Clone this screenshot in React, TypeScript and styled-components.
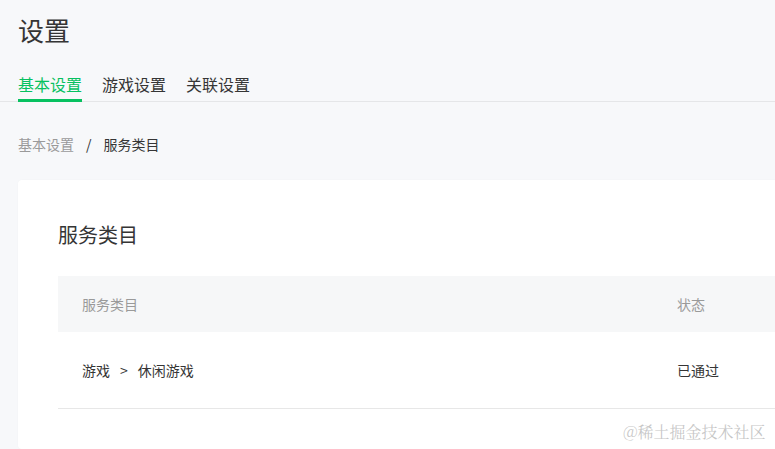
import React from 'react';
import styled, { createGlobalStyle } from 'styled-components';

const GlobalStyle = createGlobalStyle`
  html, body {
    margin: 0;
    padding: 0;
    background: #f7f8fa;
    overflow: hidden;
  }
  body {
    font-family: "Noto Sans CJK SC", "Noto Sans", sans-serif;
    color: #353535;
  }
`;

const Page = styled.div`
  position: relative;
  width: 820px;
  height: 449px;
  padding: 0 0 0 18px;
  box-sizing: border-box;
`;

const Title = styled.h1`
  margin: 0;
  padding-top: 13px;
  font-size: 26px;
  line-height: 34px;
  font-weight: 400;
  color: #353535;
`;

const Tabs = styled.div`
  display: flex;
  gap: 20px;
  margin-top: 26px;
  margin-left: -18px;
  padding-left: 18px;
  border-bottom: 1px solid #e5e6e8;
`;

const Tab = styled.div<{ $active?: boolean }>`
  font-size: 16px;
  line-height: 22px;
  padding-bottom: 4px;
  color: ${(p) => (p.$active ? '#07c160' : '#353535')};
  border-bottom: 3px solid ${(p) => (p.$active ? '#07c160' : 'transparent')};
  margin-bottom: -1px;
`;

const Breadcrumb = styled.div`
  display: flex;
  align-items: center;
  gap: 12px;
  margin-top: 32px;
  font-size: 14px;
  line-height: 20px;
  color: #353535;
`;

const Crumb = styled.span<{ $muted?: boolean }>`
  color: ${(p) => (p.$muted ? '#9a9a9a' : '#353535')};
`;

const Card = styled.div`
  margin-top: 26px;
  background: #fff;
  border-radius: 4px;
  padding: 40px 0 40px 40px;
  box-sizing: border-box;
  box-shadow: 0 0 2px rgba(0, 0, 0, 0.03);
`;

const CardTitle = styled.h2`
  margin: 0 0 26px;
  font-size: 20px;
  line-height: 30px;
  font-weight: 400;
  color: #353535;
`;

const Row = styled.div<{ $head?: boolean }>`
  display: grid;
  grid-template-columns: 595px 1fr;
  align-items: center;
  height: ${(p) => (p.$head ? '56px' : '76px')};
  padding-left: 24px;
  background: ${(p) => (p.$head ? '#f6f7f8' : '#fff')};
  border-bottom: ${(p) => (p.$head ? 'none' : '1px solid #e7e7e7')};
  font-size: 14px;
  line-height: 20px;
  color: ${(p) => (p.$head ? '#9a9a9a' : '#353535')};
`;

const Arrow = styled.span`
  margin: 0 10px;
`;

const Watermark = styled.div`
  position: absolute;
  left: 623px;
  top: 420px;
  font-family: "Noto Serif CJK SC", "Noto Sans CJK SC", serif;
  font-size: 16px;
  line-height: 24px;
  color: rgba(180, 180, 180, 0.75);
  white-space: nowrap;
`;

const App: React.FC = () => (
  <>
    <GlobalStyle />
    <Page>
      <Title>设置</Title>
      <Tabs>
        <Tab $active>基本设置</Tab>
        <Tab>游戏设置</Tab>
        <Tab>关联设置</Tab>
      </Tabs>
      <Breadcrumb>
        <Crumb $muted>基本设置</Crumb>
        <Crumb>/</Crumb>
        <Crumb>服务类目</Crumb>
      </Breadcrumb>
      <Card>
        <CardTitle>服务类目</CardTitle>
        <Row $head>
          <span>服务类目</span>
          <span>状态</span>
        </Row>
        <Row>
          <span>
            游戏<Arrow>&gt;</Arrow>休闲游戏
          </span>
          <span>已通过</span>
        </Row>
      </Card>
      <Watermark>@稀土掘金技术社区</Watermark>
    </Page>
  </>
);

export default App;
